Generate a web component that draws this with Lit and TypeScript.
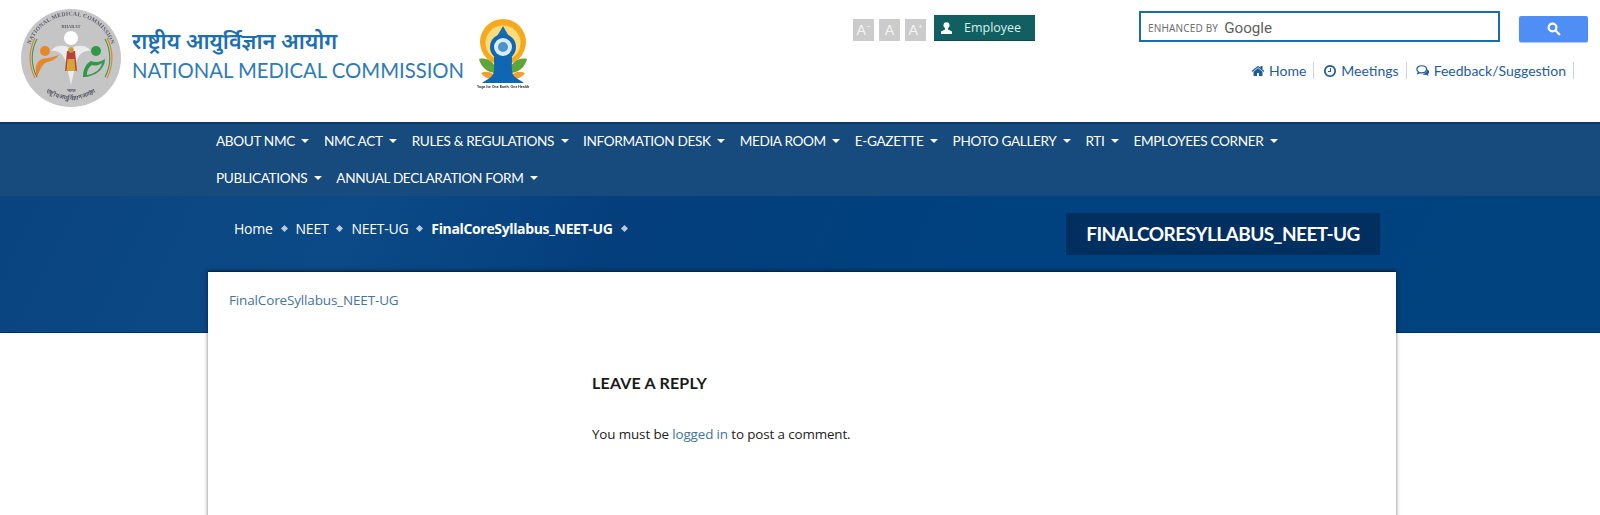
import { LitElement, html, css, svg } from "lit";
import { customElement } from "lit/decorators.js";

const home = svg`<path d="M1472 992v480q0 26-19 45t-45 19h-384v-384h-256v384h-384q-26 0-45-19t-19-45v-480q0-1 .5-3t.5-3l575-474 575 474q1 2 1 6zm223-69l-62 74q-8 9-21 11h-3q-13 0-21-7l-692-577-692 577q-12 8-24 7-13-2-21-11l-62-74q-8-10-7-23.5t11-21.5l719-599q32-26 76-26t76 26l244 204v-195q0-14 9-23t23-9h192q14 0 23 9t9 23v408l219 182q10 8 11 21.5t-7 23.5z"/>`;
const clock = svg`<path d="M1024 544v448q0 14-9 23t-23 9h-320q-14 0-23-9t-9-23v-64q0-14 9-23t23-9h224v-352q0-14 9-23t23-9h64q14 0 23 9t9 23zm416 352q0-148-73-273t-198-198-273-73-273 73-198 198-73 273 73 273 198 198 273 73 273-73 198-198 73-273zm224 0q0 209-103 385.5t-279.5 279.5-385.5 103-385.5-103-279.5-279.5-103-385.5 103-385.5 279.5-279.5 385.5-103 385.5 103 279.5 279.5 103 385.5z"/>`;

const menu1 = ["ABOUT NMC", "NMC ACT", "RULES & REGULATIONS", "INFORMATION DESK", "MEDIA ROOM", "E-GAZETTE", "PHOTO GALLERY", "RTI", "EMPLOYEES CORNER"];
const menu2 = ["PUBLICATIONS", "ANNUAL DECLARATION FORM"];

@customElement("app-root")
export class AppRoot extends LitElement {
  static styles = css`
    :host { display: block; height: 515px; overflow: hidden; background: #fff; font-family: "Lato", "Noto Sans", sans-serif; }
    a { color: inherit; text-decoration: none; }
    .top { height: 122px; display: flex; align-items: flex-start; }
    .brand { display: flex; align-items: flex-start; padding: 9px 0 0 21px; width: 839px; box-sizing: border-box; flex: none; }
    .seal { width: 100px; height: 98px; flex: none; filter: blur(.35px); }
    .names { margin: 19px 0 0 11px; width: 345px; flex: none; }
    .hi { font: 600 21.7px/26px "Noto Sans", "DejaVu Sans", sans-serif; color: #1d6fb2; white-space: nowrap; }
    .en { font: 400 20.3px/28px "Lato", sans-serif; color: #2f7ab5; white-space: nowrap; margin-top: 2px; }
    .yoga { width: 52px; height: 72px; margin-top: 8px; flex: none; filter: blur(.35px); }
    .mid { display: flex; align-items: flex-end; gap: 5px; margin: 15px 0 0 14px; width: 182px; flex: none; }
    .sz { width: 21px; height: 22px; background: #cbcbcb; color: #f4f4f4; font: 400 14px/22px "Lato", sans-serif; text-align: center; }
    .emp { width: 101px; height: 26px; margin-left: 3px; background: #115f61; color: #d8f0ee; font: 400 12.5px/24px "Open Sans", sans-serif; display: flex; align-items: center; box-sizing: border-box; padding-left: 7px; gap: 12px; border-bottom: 1px solid #0d4c4e; flex: none; }
    .emp svg { width: 11px; height: 12px; fill: #fff; }
    .right { flex: none; width: 449px; margin: 11px 0 0 104px; }
    .searchrow { display: flex; align-items: flex-end; gap: 19px; }
    .box { width: 361px; height: 31px; box-sizing: border-box; border: 2px solid #1c6cab; display: flex; align-items: center; padding: 3px 0 0 7px; gap: 6px; }
    .enh { font: 400 10px/12px "Noto Sans", "Open Sans", sans-serif; color: #6f6f6f; letter-spacing: .15px; }
    .goog { font: 400 15.2px/18px "Roboto", sans-serif; color: #5f5f5f; }
    .btn { width: 69px; height: 26px; background: #4f8ff5; border-radius: 2px; display: flex; align-items: center; justify-content: center; box-shadow: 0 1px 1px #a9c4ec; }
    .btn svg { width: 14px; height: 14px; stroke: #fff; fill: none; stroke-width: 2.2; }
    .links { display: flex; align-items: center; justify-content: flex-end; margin: 20px 14px 0 0; color: #1f5c9c; font: 400 14px/18px "Lato", sans-serif; }
    .links a { display: flex; align-items: center; gap: 4px; padding: 0 7px 0 9px; border-right: 1px solid #c7d6e4; height: 17px; white-space: nowrap; }
    .links svg { width: 14px; height: 14px; fill: #1f5c9c; flex: none; }
    .nav { height: 74px; background: #174b7e; padding-left: 216px; box-sizing: border-box; box-shadow: inset 0 2px #0b3a70; }
    .row { display: flex; height: 37px; align-items: center; color: #fff; font: 400 13.6px/36px "Lato", sans-serif; letter-spacing: -.35px; gap: 14.5px; white-space: nowrap; }
    .row a { display: flex; align-items: center; gap: 6.5px; }
    .caret { width: 0; height: 0; border: 4px solid transparent; border-top-color: #fff; border-bottom: 0; }
    .hero { height: 137px; background: linear-gradient(115deg, #0a4480 0%, #0b4a86 22%, #043f7c 38%, #00417f 60%, #00437f 100%); box-sizing: border-box; display: flex; align-items: flex-start; padding: 17px 220px 0 234px; justify-content: space-between; border-bottom: 1px solid #002f66; }
    .crumbs { display: flex; align-items: center; color: #fff; font: 400 14px/36px "Open Sans", sans-serif; height: 37px; gap: 8px; letter-spacing: -.25px; white-space: nowrap; margin-top: -3px; }
    .crumbs b { font-weight: 700; letter-spacing: -.35px; }
    .dot { width: 5px; height: 5px; background: #b9c9da; transform: rotate(45deg); margin: 0 1px; flex: none; }
    .title { width: 314px; height: 42px; background: #002f60; color: #fff; font: 700 19px/42px "Lato", sans-serif; text-align: center; letter-spacing: -.55px; white-space: nowrap; }
    .card { width: 1188px; height: 300px; margin: -62px 0 0 208px; background: #fff; position: relative; box-shadow: 0 0 4px rgba(0,0,0,.55); box-sizing: border-box; padding: 18px 0 0 21px; border-top: 1px solid #00264f; }
    .doc { display: block; color: #44739f; font: 400 13.5px/20px "Open Sans", sans-serif; letter-spacing: -.15px; }
    .reply { margin: 63px 0 0 363px; }
    h3 { margin: 0; color: #1a1a1a; font: 700 16px/20px "Lato", sans-serif; letter-spacing: .2px; }
    p { margin: 31px 0 0; color: #222; font: 400 13.4px/20px "Open Sans", sans-serif; letter-spacing: -.12px; }
    p a { color: #44739f; }
    .seal text { font-family: "Liberation Serif", serif; font-weight: 700; fill: #5d5d6b; }
    .cap { font: 700 3.5px "Liberation Sans", sans-serif; fill: #222; }
  `;

  private item(t: string) {
    return html`<a href="#">${t}<span class="caret"></span></a>`;
  }

  render() {
    return html`
      <header class="top">
        <div class="brand">
          <svg class="seal" viewBox="0 0 100 98">
            <defs>
              <path id="arcT" d="M7.500 49 A42.500 42.500 0 0 1 92.500 49" fill="none"></path>
              <path id="arcB" d="M8 55 A42.500 42.500 0 0 0 92 55" fill="none"></path>
            </defs>
            <ellipse cx="50" cy="49" rx="50" ry="49" fill="#c5c5c6"></ellipse>
            <text font-size="5.800" letter-spacing=".2" text-anchor="middle"><textPath href="#arcT" startOffset="50%">NATIONAL MEDICAL COMMISSION</textPath></text>
            <text x="50" y="19" font-size="4.500" text-anchor="middle">BHARAT</text>
            <text x="50" y="83" font-size="4.500" text-anchor="middle">भारत</text>
            <text font-size="6" text-anchor="middle"><textPath href="#arcB" startOffset="50%" dy="4">राष्ट्रीय आयुर्विज्ञान आयोग</textPath></text>
            <path d="M14 29 A43 43 0 0 0 14 69" stroke="#e67e22" stroke-width="1.100" fill="none"></path>
            <path d="M16 30 A40 40 0 0 0 16 68" stroke="#3a9a44" stroke-width="1.100" fill="none"></path>
            <path d="M86 29 A43 43 0 0 1 86 69" stroke="#e67e22" stroke-width="1.100" fill="none"></path>
            <path d="M84 30 A40 40 0 0 1 84 68" stroke="#3a9a44" stroke-width="1.100" fill="none"></path>
            <circle cx="50" cy="29" r="7" fill="#fff"></circle>
            <path d="M50 40 C44 35 34 36 30 42 C38 41 43 46 45 54 L50 76 L55 54 C57 46 62 41 70 42 C66 36 56 35 50 40Z" fill="#ececec"></path>
            <circle cx="24" cy="42" r="5" fill="#e8862a"></circle>
            <path d="M16 68 C13 58 16 52 21 50 C27 49 33 48 38 46 C33 53 26 52 23 55 C20 58 18 63 16 68Z" fill="#e8862a"></path>
            <circle cx="75" cy="42" r="5" fill="#2e9a48"></circle>
            <path d="M62 68 C62 59 66 54 70 52 C74 54 80 53 84 50 C84 60 74 68 62 68Z M66 66 C74 65 80 60 81 54 C77 57 73 57 71 56 C68 58 66 61 66 66Z" fill="#2e9a48" fill-rule="evenodd"></path>
            <path d="M46 42 H54 L56 62 H44Z" fill="#b5413a"></path>
            <circle cx="50" cy="41" r="2.800" fill="#c79a3a"></circle>
            <path d="M46.500 50h7l1 12h-9z" fill="#d8a437"></path>
          </svg>
          <div class="names">
            <div class="hi">राष्ट्रीय आयुर्विज्ञान आयोग</div>
            <div class="en">NATIONAL MEDICAL COMMISSION</div>
          </div>
          <svg class="yoga" viewBox="0 0 52 72">
            <circle cx="26" cy="25" r="23" fill="#f6a91e"></circle>
            <circle cx="26" cy="26" r="17.500" fill="#fbdc7a"></circle>
            <path d="M26 9 L33 21 C29 19 23 19 19 21Z" fill="#1b6cb5"></path>
            <path d="M2 42 C11 40 19 46 20 56 C10 56 4 50 2 42Z" fill="#5fa53a"></path>
            <path d="M50 42 C41 40 33 46 32 56 C42 56 48 50 50 42Z" fill="#5fa53a"></path>
            <path d="M4 56 C11 53 17 56 19 61 C13 63 7 61 4 56Z" fill="#f0a030"></path>
            <path d="M48 56 C41 53 35 56 33 61 C39 63 45 61 48 56Z" fill="#f0a030"></path>
            <path d="M17 40 C17 52 18 56 14 60 C10 63 7 64 5 66 H47 C45 64 42 63 38 60 C34 56 35 52 35 40Z" fill="#0f67b4"></path>
            <circle cx="26" cy="30" r="13" fill="#0f67b4"></circle>
            <circle cx="26" cy="30" r="9" fill="#dcebf5"></circle>
            <circle cx="26" cy="30" r="5" fill="#4a94cc"></circle>
            <text class="cap" x="26" y="70.500" text-anchor="middle">Yoga for One Earth, One Health</text>
          </svg>
        </div>
        <div class="mid">
          <span class="sz">A⁻</span><span class="sz">A</span><span class="sz">A⁺</span>
          <a class="emp" href="#">
            <svg viewBox="0 0 11 12"><circle cx="5.500" cy="3.200" r="3"></circle><path d="M4 6h3v1.600L11 9.500V12H0V9.500L4 7.600z"></path></svg>
            Employee
          </a>
        </div>
        <div class="right">
          <div class="searchrow">
            <div class="box"><span class="enh">ENHANCED BY</span><span class="goog">Google</span></div>
            <div class="btn"><svg viewBox="0 0 14 14"><circle cx="5.500" cy="5.500" r="3.900"></circle><path d="M8.500 8.500L13 13"></path></svg></div>
          </div>
          <nav class="links">
            <a href="#"><svg viewBox="0 0 1792 1792">${home}</svg>Home</a>
            <a href="#"><svg viewBox="0 0 1792 1792">${clock}</svg>Meetings</a>
            <a href="#"><svg viewBox="0 0 16 14"><path d="M6.500 1C3.200 1 1 2.800 1 5c0 1.200.7 2.200 1.700 3L2 10l2.400-1.100c.7.2 1.400.3 2.100.3 3.300 0 5.500-1.800 5.500-4.200S9.800 1 6.500 1z" fill="none" stroke="#1f5c9c" stroke-width="1.400"></path><path d="M13 5c1.300.8 2 1.900 2 3 0 1-.5 1.800-1.300 2.500l.6 2.200-2.500-1.300c-1.600.3-3.300 0-4.500-.9 2.700 0 5.400-2 5.700-5.500z"></path></svg>Feedback/Suggestion</a>
          </nav>
        </div>
      </header>
      <nav class="nav">
        <div class="row">${menu1.map((m) => this.item(m))}</div>
        <div class="row">${menu2.map((m) => this.item(m))}</div>
      </nav>
      <section class="hero">
        <div class="crumbs">
          <a href="#">Home</a><i class="dot"></i><a href="#">NEET</a><i class="dot"></i><a href="#">NEET-UG</a><i class="dot"></i><b>FinalCoreSyllabus_NEET-UG</b><i class="dot"></i>
        </div>
        <div class="title">FINALCORESYLLABUS_NEET-UG</div>
      </section>
      <main class="card">
        <a class="doc" href="#">FinalCoreSyllabus_NEET-UG</a>
        <div class="reply">
          <h3>LEAVE A REPLY</h3>
          <p>You must be <a href="#">logged in</a> to post a comment.</p>
        </div>
      </main>
    `;
  }
}
